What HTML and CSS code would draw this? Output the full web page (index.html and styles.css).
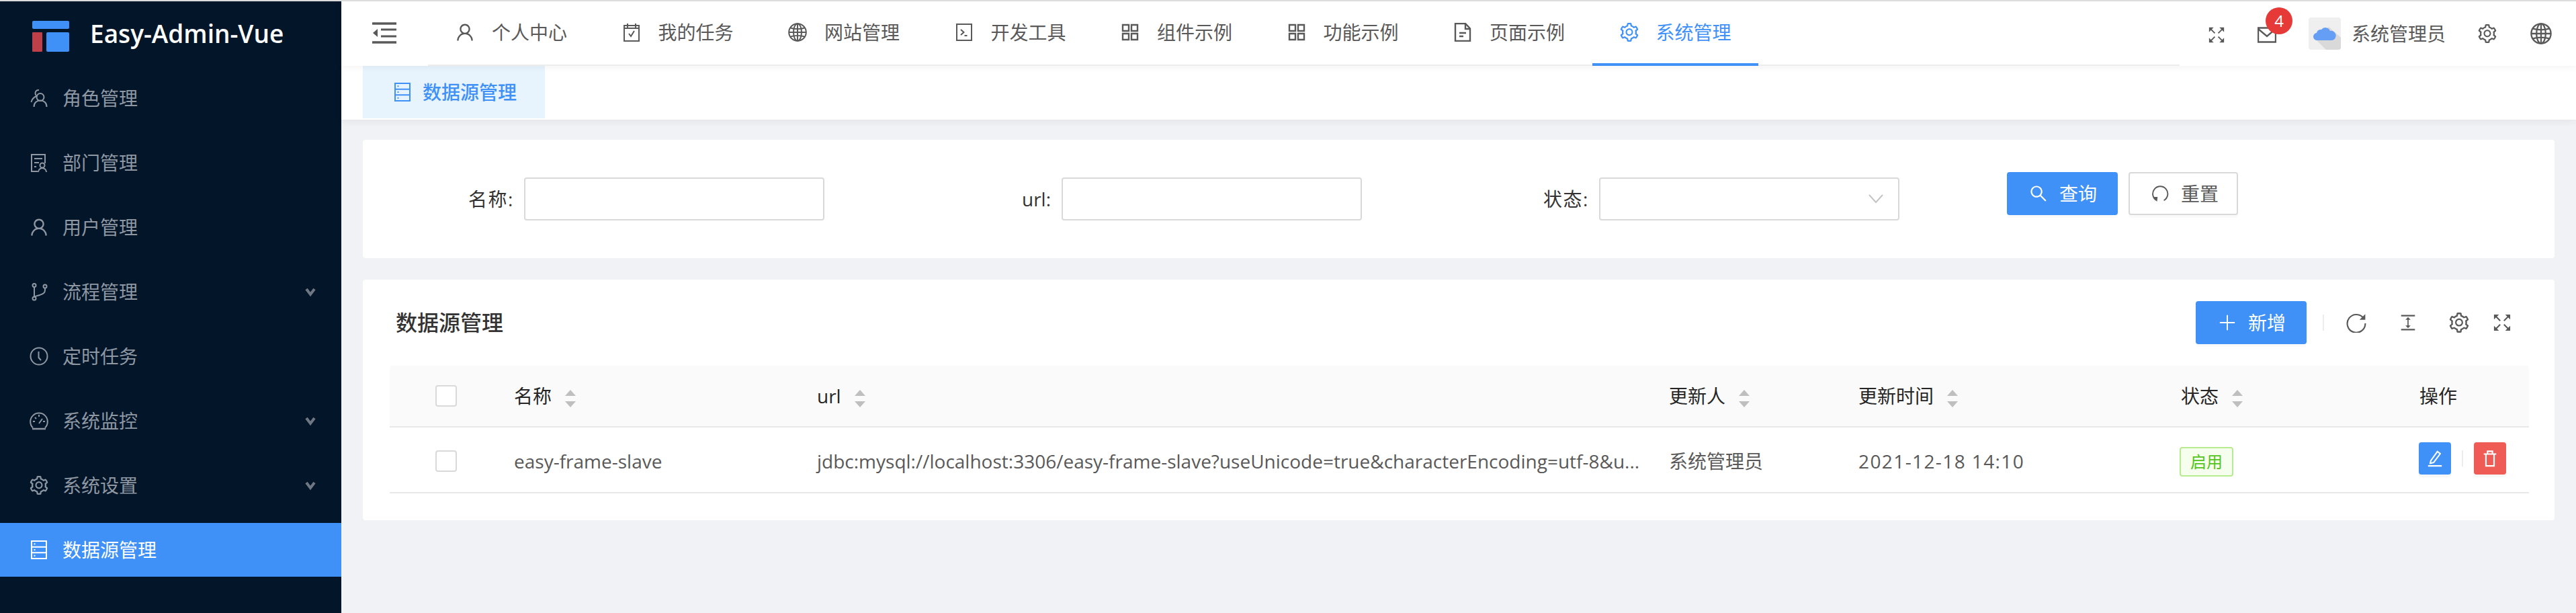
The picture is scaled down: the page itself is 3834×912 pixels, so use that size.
FILE: index.html
```html
<!DOCTYPE html>
<html lang="zh-CN">
<head>
<meta charset="utf-8">
<title>Easy-Admin-Vue</title>
<link rel="stylesheet" href="styles.css">
</head>
<body>
<svg class="defs" width="0" height="0" aria-hidden="true">
  <defs>
    <symbol id="i-user" viewBox="64 64 896 896"><path fill="currentColor" stroke="none" d="M858.5 763.6a374 374 0 0 0-80.6-119.5 375.63 375.63 0 0 0-119.5-80.6c-.4-.2-.8-.3-1.2-.5C719.5 518 760 444.7 760 362c0-137-111-248-248-248S264 225 264 362c0 82.7 40.5 156 102.8 201.1-.4.2-.8.3-1.2.5-44.8 18.9-85 46-119.5 80.6a375.63 375.63 0 0 0-80.6 119.5A371.7 371.7 0 0 0 136 901.8a8 8 0 0 0 8 8.2h60c4.4 0 7.9-3.5 8-7.8 2-77.2 33-149.5 87.8-204.3 56.7-56.7 132-87.9 212.2-87.9s155.5 31.2 212.2 87.9C779 752.7 810 825 812 902.2c.1 4.4 3.6 7.8 8 7.8h60a8 8 0 0 0 8-8.2c-1-47.8-10.9-94.3-29.5-138.2zM512 534c-45.9 0-89.1-17.9-121.6-50.4S340 407.9 340 362c0-45.9 17.9-89.1 50.4-121.6S466.1 190 512 190s89.1 17.9 121.6 50.4S684 316.1 684 362c0 45.9-17.9 89.1-50.4 121.6S557.9 534 512 534z"/></symbol>
    <symbol id="i-gear" viewBox="64 64 896 896"><path fill="currentColor" stroke="none" d="M924.8 625.7l-65.5-56c3.1-19 4.7-38.4 4.7-57.8s-1.6-38.8-4.7-57.8l65.5-56a32.03 32.03 0 0 0 9.3-35.2l-.9-2.6a443.74 443.74 0 0 0-79.7-137.9l-1.8-2.1a32.12 32.12 0 0 0-35.1-9.5l-81.3 28.9c-30-24.6-63.5-44-99.7-57.6l-15.7-85a32.05 32.05 0 0 0-25.8-25.7l-2.7-.5c-52.1-9.4-106.9-9.4-159 0l-2.7.5a32.05 32.05 0 0 0-25.8 25.7l-15.8 85.4a351.86 351.86 0 0 0-99 57.4l-81.9-29.1a32 32 0 0 0-35.1 9.5l-1.8 2.1a446.02 446.02 0 0 0-79.7 137.9l-.9 2.6c-4.5 12.5-.8 26.5 9.3 35.2l66.3 56.6c-3.1 18.8-4.6 38-4.6 57.1 0 19.2 1.5 38.4 4.6 57.1L99 625.5a32.03 32.03 0 0 0-9.3 35.2l.9 2.6c18.1 50.4 44.9 96.9 79.7 137.9l1.8 2.1a32.12 32.12 0 0 0 35.1 9.5l81.9-29.1c29.8 24.5 63.1 43.9 99 57.4l15.8 85.4a32.05 32.05 0 0 0 25.8 25.7l2.7.5a449.4 449.4 0 0 0 159 0l2.7-.5a32.05 32.05 0 0 0 25.8-25.7l15.7-85a350 350 0 0 0 99.7-57.6l81.3 28.9a32 32 0 0 0 35.1-9.5l1.8-2.1c34.8-41.1 61.6-87.5 79.7-137.9l.9-2.6c4.5-12.3.8-26.3-9.3-35zM788.3 465.9c2.5 15.1 3.8 30.6 3.8 46.1s-1.3 31-3.8 46.1l-6.6 40.1 74.7 63.9a370.03 370.03 0 0 1-42.6 73.6L721 702.8l-31.4 25.8c-23.9 19.6-50.5 35-79.3 45.8l-38.1 14.3-17.9 97a377.5 377.5 0 0 1-85 0l-17.9-97.2-37.8-14.5c-28.5-10.8-55-26.2-78.7-45.7l-31.4-25.9-93.4 33.2c-17-22.9-31.2-47.6-42.6-73.6l75.5-64.5-6.5-40c-2.4-14.9-3.7-30.3-3.7-45.5 0-15.3 1.2-30.6 3.7-45.5l6.5-40-75.5-64.5c11.3-26.1 25.6-50.7 42.6-73.6l93.4 33.2 31.4-25.9c23.7-19.5 50.2-34.9 78.7-45.7l37.9-14.3 17.9-97.2c28.1-3.2 56.8-3.2 85 0l17.9 97 38.1 14.3c28.7 10.8 55.4 26.2 79.3 45.8l31.4 25.8 92.8-32.9c17 22.9 31.2 47.6 42.6 73.6L781.8 426l6.5 39.9zM512 326c-97.2 0-176 78.8-176 176s78.8 176 176 176 176-78.8 176-176-78.8-176-176-176zm79.2 255.2A111.6 111.6 0 0 1 512 614c-29.9 0-58-11.7-79.2-32.8A111.6 111.6 0 0 1 400 502c0-29.9 11.7-58 32.8-79.2C454 401.6 482.1 390 512 390c29.9 0 58 11.6 79.2 32.8A111.6 111.6 0 0 1 624 502c0 29.9-11.7 58-32.8 79.2z"/></symbol>
    <symbol id="i-search" viewBox="64 64 896 896"><path fill="currentColor" stroke="none" d="M909.6 854.5L649.9 594.8C690.2 542.7 712 479 712 412c0-80.2-31.3-155.4-87.9-212.1-56.6-56.7-132-87.9-212.1-87.9s-155.5 31.3-212.1 87.9C143.2 256.5 112 331.8 112 412c0 80.1 31.3 155.5 87.9 212.1C256.5 680.8 331.8 712 412 712c67 0 130.6-21.8 182.7-62l259.7 259.6a8.2 8.2 0 0 0 11.6 0l43.6-43.5a8.2 8.2 0 0 0 0-11.6zM570.4 570.4C528 612.7 471.8 636 412 636s-116-23.3-158.4-65.6C211.3 528 188 471.8 188 412s23.3-116.1 65.6-158.4C296 211.3 352.2 188 412 188s116.1 23.2 158.4 65.6S636 352.2 636 412s-23.3 116.1-65.6 158.4z"/></symbol>
    <symbol id="i-role" viewBox="0 0 28 28"><circle cx="16" cy="12.500" r="5.500"/><path d="M6.500 27c0-6 4-9.500 9.500-9.500s9.500 3.500 9.500 9.500"/><path d="M14 2c-3-.5-5.500 1.500-5.500 4.500 0 2 .8 3.500 2 4.500-4 1.500-7 4.500-8 9"/></symbol>
    <symbol id="i-dept" viewBox="0 0 28 28"><path d="M12 27H3V2h20v13"/><path d="M7 8h12M7 14h7M7 20h3"/><circle cx="19" cy="18" r="3.500"/><path d="M13 28c0-3 2.500-6 6-6s6 3 6 6"/></symbol>
    <symbol id="i-branch" viewBox="0 0 28 28"><circle cx="7" cy="4.500" r="2.500"/><circle cx="7" cy="24" r="2.500"/><circle cx="23" cy="6" r="2.500"/><path d="M7 7v14.500M23 8.500v3c0 5-4 6-8 7.500-4 1-7 1.500-8 3"/></symbol>
    <symbol id="i-clock" viewBox="0 0 28 28"><circle cx="14" cy="14" r="12.500"/><path d="M13.500 7v9l3.500 4"/></symbol>
    <symbol id="i-dash" viewBox="0 0 28 28"><path d="M5 24.500a12.800 12.800 0 1 1 18 0"/><path d="M4 26h20" stroke-width="2.500"/><path d="M14 5v3M5 15h3M20 15h3M8 9l2 2M14 18l5-7"/></symbol>
    <symbol id="i-db" viewBox="0 0 28 28"><rect x="3" y="1" width="22" height="26"/><path d="M3 9.700h22M3 18.300h22M6.500 5.300h2M6.500 14h2M6.500 22.700h2"/></symbol>
    <symbol id="i-task" viewBox="0 0 28 28"><path d="M3 4h22v23H3zM8 1v6M20 1v6M3 8h22"/><path d="M10 16l3 4 5-8"/></symbol>
    <symbol id="i-globe" viewBox="0 0 28 28"><circle cx="14" cy="14" r="12.800"/><ellipse cx="14" cy="14" rx="6" ry="12.800"/><path d="M14 1v26M1.500 14h25M3.500 7.500c6 2 15 2 21 0M3.500 20.500c6-2 15-2 21 0"/></symbol>
    <symbol id="i-code" viewBox="0 0 28 28"><path d="M3 2h22v24H3z"/><path d="M9 10l4.500 4-4.500 4M14.500 19h4"/></symbol>
    <symbol id="i-apps" viewBox="0 0 28 28"><path d="M3 3h9v9H3zM16 3h9v9h-9zM3 16h9v9H3zM16 16h9v9h-9z" stroke-width="2.400"/></symbol>
    <symbol id="i-file" viewBox="0 0 28 28"><path d="M3 1h15l7 7.500V27H3z" stroke-width="2.400"/><path d="M18 1v8h7M9 15h10M9 20h6" stroke-width="2.400"/></symbol>
    <symbol id="i-full" viewBox="0 0 28 28"><path d="M4 4l7 7M24 4l-7 7M4 24l7-7M24 24l-7-7" stroke-width="2.200"/><path d="M1 1h8L1 9zM27 1h-8l8 8zM1 27h8l-8-8zM27 27h-8l8-8z" fill="currentColor" stroke="none"/></symbol>
    <symbol id="i-mail" viewBox="0 0 28 28"><path d="M1 3.500h26v21H1zM1 5l13 11 13-11" stroke-width="2.400"/></symbol>
    <symbol id="i-reset" viewBox="0 0 28 28"><path d="M8.500 25A12 12 0 1 1 20 25"/><path d="M3.500 19.500l6.500 0-1 7.500z" fill="currentColor" stroke="none"/></symbol>
    <symbol id="i-reload" viewBox="0 0 28 28"><path d="M24.500 8.500A12.500 12.500 0 1 0 26.500 15"/><path d="M26.500 2v8h-8z" fill="currentColor" stroke="none"/></symbol>
    <symbol id="i-colh" viewBox="0 0 28 28"><path d="M2 2h24M2 26h24" stroke-width="2.600"/><path d="M14 7v14"/><path d="M9.500 9L14 4.500 18.500 9zM9.500 19L14 23.500 18.500 19z" fill="currentColor" stroke="none"/></symbol>
    <symbol id="i-plus" viewBox="0 0 28 28"><path d="M14 2v24M2 14h24"/></symbol>
    <symbol id="i-edit" viewBox="0 0 28 28"><path d="M7.500 17.500L18 3l4.500 3.500L12 20.500l-5.500 1.500zM3 26h22" stroke-width="2.200"/></symbol>
    <symbol id="i-trash" viewBox="0 0 28 28"><path d="M4 7h20M10 7V2.500h8V7M7.500 7v19h13V7" stroke-width="2.400"/></symbol>
    <symbol id="i-chev" viewBox="0 0 16 16"><path d="M2 4l6 8 6-8" stroke-width="4"/></symbol>
    <symbol id="i-sel" viewBox="0 0 22 14"><path d="M1 1l10 11L21 1"/></symbol>
    <symbol id="i-fold" viewBox="0 0 36 32"><path d="M0 2h36M0 30h36" stroke-width="3.400"/><path d="M13 11h23M13 21h23" stroke-width="3"/><path d="M8 10v12L1 16z" fill="currentColor" stroke="none"/></symbol>
  </defs>
</svg>

<div class="app">
  <aside class="sider">
    <div class="brand">
      <svg class="brand-mark" viewBox="0 0 55 46" aria-hidden="true">
        <rect x="0" y="0" width="55" height="12" rx="2" fill="#3f91f7"/>
        <rect x="0" y="17" width="15" height="29" rx="1" fill="#c0404a"/>
        <rect x="21" y="17" width="34" height="29" rx="2" fill="#3f91f7"/>
      </svg>
      <span class="brand-name">Easy-Admin-Vue</span>
    </div>
    <ul class="menu">
      <li class="menu-item"><svg class="ic"><use href="#i-role"/></svg><span>角色管理</span></li>
      <li class="menu-item"><svg class="ic"><use href="#i-dept"/></svg><span>部门管理</span></li>
      <li class="menu-item"><svg class="ic"><use href="#i-user"/></svg><span>用户管理</span></li>
      <li class="menu-item"><svg class="ic"><use href="#i-branch"/></svg><span>流程管理</span><svg class="chev"><use href="#i-chev"/></svg></li>
      <li class="menu-item"><svg class="ic"><use href="#i-clock"/></svg><span>定时任务</span></li>
      <li class="menu-item"><svg class="ic"><use href="#i-dash"/></svg><span>系统监控</span><svg class="chev"><use href="#i-chev"/></svg></li>
      <li class="menu-item"><svg class="ic"><use href="#i-gear"/></svg><span>系统设置</span><svg class="chev"><use href="#i-chev"/></svg></li>
      <li class="menu-item is-active"><svg class="ic"><use href="#i-db"/></svg><span>数据源管理</span></li>
    </ul>
  </aside>

  <div class="main">
    <header class="header">
      <svg class="fold"><use href="#i-fold"/></svg>
      <nav class="nav">
        <a class="nav-item"><svg class="ic"><use href="#i-user"/></svg><span>个人中心</span></a>
        <a class="nav-item"><svg class="ic"><use href="#i-task"/></svg><span>我的任务</span></a>
        <a class="nav-item"><svg class="ic"><use href="#i-globe"/></svg><span>网站管理</span></a>
        <a class="nav-item"><svg class="ic"><use href="#i-code"/></svg><span>开发工具</span></a>
        <a class="nav-item"><svg class="ic"><use href="#i-apps"/></svg><span>组件示例</span></a>
        <a class="nav-item"><svg class="ic"><use href="#i-apps"/></svg><span>功能示例</span></a>
        <a class="nav-item"><svg class="ic"><use href="#i-file"/></svg><span>页面示例</span></a>
        <a class="nav-item is-active"><svg class="ic"><use href="#i-gear"/></svg><span>系统管理</span></a>
      </nav>
      <div class="tools">
        <svg class="tool-full"><use href="#i-full"/></svg>
        <span class="mail"><svg class="ic"><use href="#i-mail"/></svg><b class="badge">4</b></span>
        <svg class="avatar" viewBox="0 0 48 48" aria-hidden="true">
          <rect width="48" height="48" rx="4" fill="#efefef"/>
          <path d="M30 14L48 30V44a4 4 0 0 1-4 4H26L10 32z" fill="#d9d9d9"/>
          <path d="M13 34a5.500 5.500 0 0 1-1-11 6 6 0 0 1 7-5 7.500 7.500 0 0 1 13 2 7 7 0 0 1 3 14z" fill="#659ef5"/>
        </svg>
        <span class="user-name">系统管理员</span>
        <svg class="ic tool-gear"><use href="#i-gear"/></svg>
        <svg class="tool-globe"><use href="#i-globe"/></svg>
      </div>
    </header>

    <div class="tags">
      <div class="tag-tab"><svg class="ic"><use href="#i-db"/></svg><span>数据源管理</span></div>
    </div>

    <main class="content">
      <section class="card search">
        <label class="field"><span class="field-label">名称:</span><span class="input"></span></label>
        <label class="field"><span class="field-label is-latin">url:</span><span class="input"></span></label>
        <label class="field"><span class="field-label">状态:</span><span class="input select"><svg class="sel-arrow"><use href="#i-sel"/></svg></span></label>
        <div class="search-actions">
          <button class="btn btn-primary"><svg class="btn-ic"><use href="#i-search"/></svg>查询</button>
          <button class="btn btn-plain"><svg class="btn-ic"><use href="#i-reset"/></svg>重置</button>
        </div>
      </section>

      <section class="card list">
        <div class="list-head">
          <h2 class="list-title">数据源管理</h2>
          <button class="btn btn-primary"><svg class="btn-ic"><use href="#i-plus"/></svg>新增</button>
          <i class="vline"></i>
          <svg class="tb-ic tb-reload"><use href="#i-reload"/></svg>
          <svg class="tb-ic tb-colh"><use href="#i-colh"/></svg>
          <svg class="tb-ic tb-gear"><use href="#i-gear"/></svg>
          <svg class="tb-ic tb-full"><use href="#i-full"/></svg>
        </div>
        <table class="table">
          <colgroup>
            <col class="c-check"><col class="c-name"><col class="c-url"><col class="c-user"><col class="c-time"><col class="c-state"><col class="c-op">
          </colgroup>
          <thead>
            <tr>
              <th><span class="check"></span></th>
              <th>名称<span class="sort"></span></th>
              <th>url<span class="sort"></span></th>
              <th>更新人<span class="sort"></span></th>
              <th>更新时间<span class="sort"></span></th>
              <th>状态<span class="sort"></span></th>
              <th>操作</th>
            </tr>
          </thead>
          <tbody>
            <tr>
              <td><span class="check"></span></td>
              <td>easy-frame-slave</td>
              <td class="url">jdbc:mysql://localhost:3306/easy-frame-slave?useUnicode=true&amp;characterEncoding=utf-8&amp;u...</td>
              <td>系统管理员</td>
              <td class="time">2021-12-18 14:10</td>
              <td><span class="status">启用</span></td>
              <td>
                <div class="ops">
                  <button class="op op-edit"><svg class="op-ic"><use href="#i-edit"/></svg></button>
                  <i class="op-line"></i>
                  <button class="op op-del"><svg class="op-ic"><use href="#i-trash"/></svg></button>
                </div>
              </td>
            </tr>
          </tbody>
        </table>
      </section>
    </main>
  </div>
</div>
</body>
</html>
```

FILE: styles.css
```css
* { box-sizing: border-box; }
html, body { margin: 0; height: 100%; }
body {
  height: 912px;
  overflow: hidden;
  background: #f0f2f5;
  border-top: 2px solid #dcdcdc;
  font-family: "Open Sans", "Noto Sans CJK SC", sans-serif;
  font-size: 28px;
  line-height: 40px;
  color: #595959;
}
.defs { position: absolute; }
svg { display: block; flex: none; fill: none; stroke: currentColor; stroke-width: 2; }
.ic { width: 28px; height: 28px; }

.app { display: flex; height: 910px; }

/* Sidebar */
.sider { width: 508px; flex: none; background: #021529; color: #8e97a2; }
.brand { height: 96px; display: flex; align-items: center; padding-left: 48px; }
.brand-mark { width: 55px; height: 46px; margin-top: 8px; stroke: none; }
.brand-name { margin-left: 31px; font-size: 37px; font-weight: 600; color: #fff; }
.menu { list-style: none; margin: 8px 0 0; padding: 0; display: flex; flex-direction: column; gap: 16px; }
.menu-item { height: 80px; display: flex; align-items: center; gap: 21px; padding: 0 38px 0 44px; }
.chev { width: 16px; height: 16px; margin-left: auto; color: #6e7782; }
.menu-item.is-active { background: #3f91f7; color: #fff; }

/* Header */
.main { flex: 1; min-width: 0; display: flex; flex-direction: column; }
.header { height: 96px; flex: none; display: flex; align-items: center; background: #fff; position: relative; z-index: 2; box-shadow: 0 2px 10px rgba(0, 0, 0, .05); padding-left: 46px; }
.fold { width: 36px; height: 32px; margin-top: -2px; color: #595959; }
.nav { display: flex; height: 96px; margin-left: 47px; width: 2607px; flex: none; border-bottom: 2px solid #ececec; }
.nav-item { width: 247.5px; height: 96px; flex: none; display: flex; align-items: center; gap: 26px; padding-left: 41px; border-bottom: 4px solid transparent; margin-bottom: -2px; }
.nav-item.is-active { color: #3f91f7; border-bottom-color: #3f91f7; }
.tools { flex: 1; display: flex; align-items: center; padding-left: 43px; height: 96px; }
.tool-full { width: 24px; height: 24px; margin-top: 4px; }
.mail { position: relative; margin-left: 49px; margin-top: 3px; }
.badge { position: absolute; left: 12px; top: -27px; width: 40px; height: 40px; border-radius: 50%; background: #e53a37; color: #fff; font-size: 24px; font-weight: 400; line-height: 40px; text-align: center; }
.avatar { width: 48px; height: 48px; margin-left: 48px; stroke: none; }
.user-name { margin-left: 16px; }
.tool-gear { margin-left: 48px; }
.tool-globe { width: 32px; height: 32px; margin-left: 50px; }

/* Tags */
.tags { height: 80px; flex: none; background: #fff; padding: 0 0 2px 32px; box-shadow: 0 4px 10px rgba(0, 21, 41, .05); position: relative; z-index: 1; }
.tag-tab { width: 271px; height: 78px; display: flex; align-items: center; gap: 16px; padding-left: 45px; background: #e7f4fe; color: #3f91f7; font-weight: 500; }

/* Content */
.content { padding: 30px 32px 0; display: flex; flex-direction: column; gap: 32px; }
.card { background: #fff; border-radius: 4px; }
.search { height: 176px; display: flex; align-items: center; padding-left: 157px; gap: 270px; }
.field { display: flex; align-items: center; gap: 16px; color: #333; }
.field-label { width: 67px; text-align: right; white-space: nowrap; letter-spacing: 1.5px; }
.field-label.is-latin { letter-spacing: 0; }
.input { display: flex; align-items: center; justify-content: flex-end; width: 447px; height: 64px; border: 2px solid #d9d9d9; border-radius: 4px; background: #fff; }
.sel-arrow { width: 22px; height: 14px; margin-right: 22px; color: #c4c4c4; }
.search-actions { display: flex; gap: 16px; margin: -16px 0 0 -110px; }

.btn { width: 165px; height: 64px; display: flex; align-items: center; gap: 18px; padding: 0 0 0 32px; border: 2px solid #d9d9d9; border-radius: 4px; background: #fff; color: #595959; font: inherit; box-shadow: 0 4px 0 rgba(0, 0, 0, .02); }
.btn-primary { background: #3f91f7; border-color: #3f91f7; color: #fff; }
.btn-plain { width: 163px; }
.btn-ic { width: 26px; height: 26px; }

.list { height: 358px; padding: 0 38px 0 40px; }
.list-head { height: 128px; display: flex; align-items: center; padding-right: 26px; }
.list-title { margin: 0 auto 0 9px; font-size: 32px; font-weight: 500; color: #333; }
.vline { width: 2px; height: 24px; margin-left: 24px; background: #ececec; }
.tb-ic { color: #595959; }
.tb-reload { width: 30px; height: 30px; margin-left: 33px; }
.tb-colh { width: 24px; height: 26px; margin-left: 50px; }
.tb-gear { width: 30px; height: 30px; margin-left: 49px; }
.tb-full { width: 28px; height: 26px; margin-left: 35px; }

/* Table */
.table { width: 100%; table-layout: fixed; border-collapse: separate; border-spacing: 0; }
.c-check { width: 185px; }
.c-name { width: 451px; }
.c-url { width: 1268px; }
.c-user { width: 282px; }
.c-time { width: 480px; }
.c-state { width: 355px; }
.c-op { width: 163px; }
.table th, .table td { padding: 0; text-align: left; border-bottom: 2px solid #e8e8e8; white-space: nowrap; }
.table th:first-child, .table td:first-child { padding-left: 68px; }
.table th { height: 92px; background: #fafafa; font-weight: 400; color: #262626; }
.table th:first-child { border-top-left-radius: 4px; }
.table th:last-child { border-top-right-radius: 4px; }
.table td { height: 98px; padding-top: 4px; color: #595959; }
.table .time { letter-spacing: 1.4px; }
.check { display: block; width: 32px; height: 32px; border: 2px solid #d9d9d9; border-radius: 4px; background: #fff; }
.sort { display: inline-block; vertical-align: middle; position: relative; width: 16px; height: 26px; margin-left: 20px; }
.sort::before, .sort::after { content: ""; position: absolute; left: 0; border-left: 8px solid transparent; border-right: 8px solid transparent; }
.sort::before { top: 0; border-bottom: 9px solid #bfbfbf; }
.sort::after { bottom: 0; border-top: 9px solid #bfbfbf; }
.status { display: inline-block; width: 80px; height: 44px; margin-left: -2px; border: 2px solid #b7eb8f; border-radius: 4px; background: #f6ffed; color: #52c41a; font-size: 24px; line-height: 40px; text-align: center; vertical-align: middle; }
.ops { display: flex; align-items: center; margin: -8px 0 0 -1px; }
.op { width: 48px; height: 48px; padding: 0; display: flex; align-items: center; justify-content: center; border: 0; border-radius: 4px; color: #fff; box-shadow: 0 4px 0 rgba(0, 0, 0, .03); }
.op-edit { background: #3f91f7; }
.op-del { background: #ef5b55; }
.op-ic { width: 26px; height: 26px; }
.op-line { width: 2px; height: 24px; margin: 0 16px; background: #ececec; }
```
